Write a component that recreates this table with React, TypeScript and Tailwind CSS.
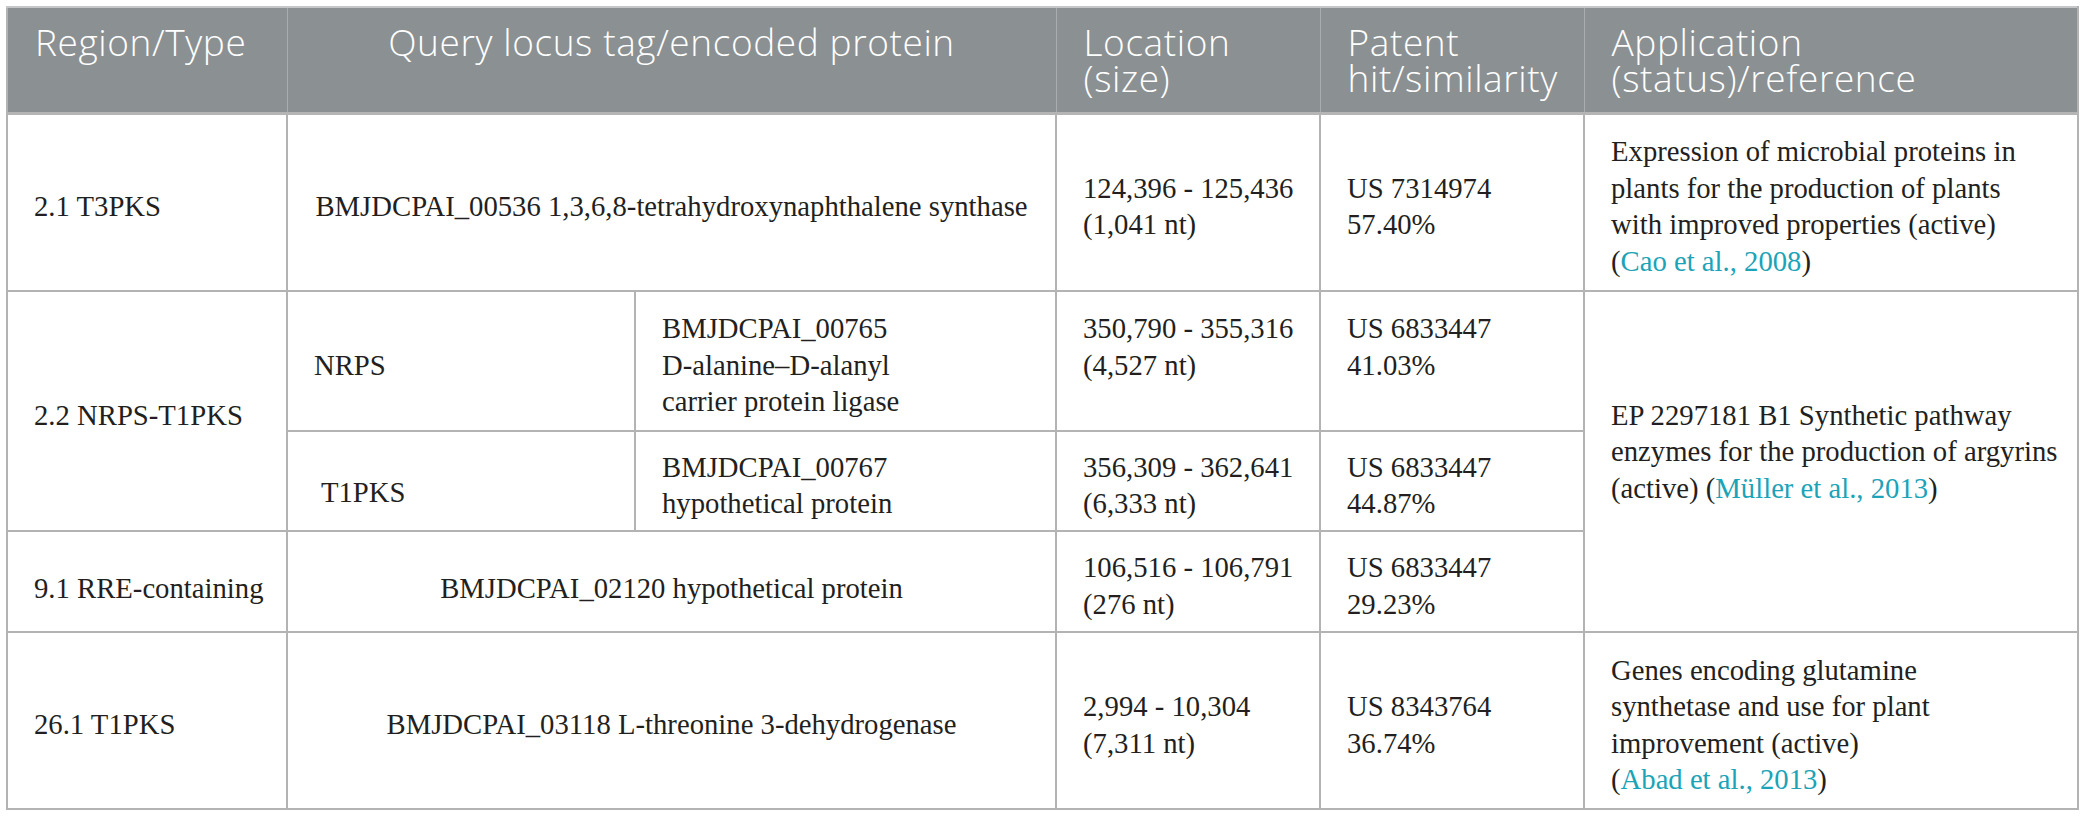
import React from 'react';

const Cite: React.FC<{ children: React.ReactNode }> = ({ children }) => (
    <span className="text-[#1ba3b8]">{children}</span>
);

const th = "border-x border-[#a9adb0] px-[27px] pt-[16px] align-top text-left font-light whitespace-nowrap";
const td = "border-2 border-[#b3b3b3] px-[26px] pt-[8px] pb-0 align-middle text-left whitespace-nowrap";

export default function App() {
    return (
        <div className="w-[2083px] h-[818px] bg-white pt-[6px] pl-[6px] overflow-hidden">
            <table className="table-fixed border-collapse w-[2071px] font-['Liberation_Serif',serif] text-[28.7px] leading-[36.5px] text-[#231f20]">
                <colgroup>
                    <col className="w-[280px]" />
                    <col className="w-[348px]" />
                    <col className="w-[421px]" />
                    <col className="w-[264px]" />
                    <col className="w-[264px]" />
                    <col className="w-[494px]" />
                </colgroup>
                <thead>
                    <tr className="h-[106px] bg-[#8b9093] text-white font-['Open_Sans',sans-serif] text-[37px] leading-[36px] tracking-[0.6px] border-t-2 border-t-[#c4c6c7] border-b-[3px] border-b-[#b5b5b5] border-x-2 border-x-[#b3b3b3]">
                        <th className={th}>Region/Type</th>
                        <th colSpan={2} className={`${th} !text-center`}>Query locus tag/encoded protein</th>
                        <th className={th}>Location<br />(size)</th>
                        <th className={th}>Patent<br />hit/similarity</th>
                        <th className={th}>Application<br />(status)/reference</th>
                    </tr>
                </thead>
                <tbody>
                    {/* 2.1 */}
                    <tr className="h-[178px]">
                        <td className={td}>2.1 T3PKS</td>
                        <td colSpan={2} className={`${td} !text-center`}>BMJDCPAI_00536 1,3,6,8-tetrahydroxynaphthalene synthase</td>
                        <td className={td}>124,396 - 125,436<br />(1,041 nt)</td>
                        <td className={td}>US 7314974<br />57.40%</td>
                        <td className={td}>
                            Expression of microbial proteins in<br />
                            plants for the production of plants<br />
                            with improved properties (active)<br />
                            (<Cite>Cao et al., 2008</Cite>)
                        </td>
                    </tr>

                    {/* 2.2 NRPS */}
                    <tr className="h-[140px]">
                        <td rowSpan={2} className={td}>2.2 NRPS-T1PKS</td>
                        <td className={td}>NRPS</td>
                        <td className={td}>BMJDCPAI_00765<br />D-alanine–D-alanyl<br />carrier protein ligase</td>
                        <td className={`${td} !align-top !pt-[18px]`}>350,790 - 355,316<br />(4,527 nt)</td>
                        <td className={`${td} !align-top !pt-[18px]`}>US 6833447<br />41.03%</td>
                        <td rowSpan={3} className={`${td} !pb-[28px]`}>
                            EP 2297181 B1 Synthetic pathway<br />
                            enzymes for the production of argyrins<br />
                            (active) (<Cite>Müller et al., 2013</Cite>)
                        </td>
                    </tr>

                    {/* 2.2 T1PKS */}
                    <tr className="h-[100px]">
                        <td className={`${td} !pl-[33px] !pt-[22px]`}>T1PKS</td>
                        <td className={td}>BMJDCPAI_00767<br />hypothetical protein</td>
                        <td className={td}>356,309 - 362,641<br />(6,333 nt)</td>
                        <td className={td}>US 6833447<br />44.87%</td>
                    </tr>

                    {/* 9.1 */}
                    <tr className="h-[101px]">
                        <td className={`${td} !pt-[14px]`}>9.1 RRE-containing</td>
                        <td colSpan={2} className={`${td} !text-center !pt-[14px]`}>BMJDCPAI_02120 hypothetical protein</td>
                        <td className={td}>106,516 - 106,791<br />(276 nt)</td>
                        <td className={td}>US 6833447<br />29.23%</td>
                    </tr>

                    {/* 26.1 */}
                    <tr className="h-[177px]">
                        <td className={td}>26.1 T1PKS</td>
                        <td colSpan={2} className={`${td} !text-center`}>BMJDCPAI_03118 L-threonine 3-dehydrogenase</td>
                        <td className={td}>2,994 - 10,304<br />(7,311 nt)</td>
                        <td className={td}>US 8343764<br />36.74%</td>
                        <td className={td}>
                            Genes encoding glutamine<br />
                            synthetase and use for plant<br />
                            improvement (active)<br />
                            (<Cite>Abad et al., 2013</Cite>)
                        </td>
                    </tr>
                </tbody>
            </table>
        </div>
    );
}
